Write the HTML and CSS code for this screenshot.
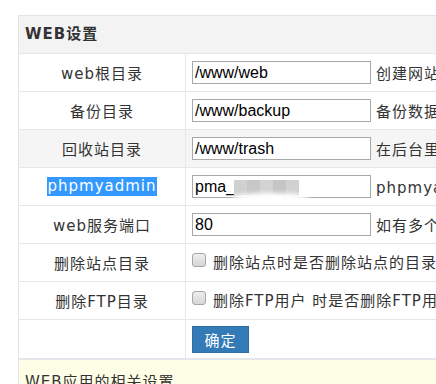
FILE: index.html
```html
<!doctype html>
<html lang="zh-CN">

<head>
    <meta charset="utf-8">
    <title>WEB设置</title>
    <link rel="stylesheet" href="styles.css">
</head>

<body>
    <div class="panel">
        <div class="panel_head">WEB设置</div>

        <div class="row">
            <div class="label">web根目录</div>
            <div class="field">
                <input class="text" type="text" value="/www/web">
                <span class="tip">创建网站时默认的根目录</span>
            </div>
        </div>
        <div class="row">
            <div class="label">备份目录</div>
            <div class="field">
                <input class="text" type="text" value="/www/backup">
                <span class="tip">备份数据存放的目录</span>
            </div>
        </div>
        <div class="row hover">
            <div class="label">回收站目录</div>
            <div class="field">
                <input class="text" type="text" value="/www/trash">
                <span class="tip">在后台里删除的文件会移到这里</span>
            </div>
        </div>
        <div class="row">
            <div class="label"><span class="sel">phpmyadmin</span></div>
            <div class="field">
                <span class="masked">
                    <input class="text" type="text" value="pma_">
                    <span class="mosaic">
                        <i class="m1"></i><i class="m2"></i><i class="m3"></i><i class="m4"></i><i class="m5"></i>
                    </span>
                    <span class="smear"></span>
                </span>
                <span class="tip">phpmyadmin访问目录</span>
            </div>
        </div>
        <div class="row">
            <div class="label">web服务端口</div>
            <div class="field">
                <input class="text" type="text" value="80">
                <span class="tip">如有多个端口请用逗号隔开</span>
            </div>
        </div>
        <div class="row">
            <div class="label">删除站点目录</div>
            <div class="field">
                <label class="check"><input type="checkbox">删除站点时是否删除站点的目录</label>
            </div>
        </div>
        <div class="row">
            <div class="label">删除FTP目录</div>
            <div class="field">
                <label class="check"><input type="checkbox">删除FTP用户 时是否删除FTP用户目录</label>
            </div>
        </div>
        <div class="row row_btn">
            <div class="label"></div>
            <div class="field">
                <button class="btn" type="button">确定</button>
            </div>
        </div>

        <div class="notice">WEB应用的相关设置</div>
    </div>
</body>

</html>
```

FILE: styles.css
```css
html {
    overflow: hidden;
}

body {
    margin: 0;
    background: #fff;
    color: #333;
    font-family: "DejaVu Sans", "Noto Sans CJK SC", sans-serif;
    font-size: 15px;
    letter-spacing: 1px;
}

.panel {
    margin: 15px 0 0 18px;
    width: 760px;
    border: 1px solid #e3e4e6;
    border-bottom: 0;
}

.panel_head {
    height: 37px;
    line-height: 37px;
    padding-left: 6px;
    background: #f3f3f4;
    border-bottom: 1px solid #e6e6e6;
    font-weight: bold;
    color: #333;
}

.row {
    display: grid;
    grid-template-columns: 167px 1fr;
    height: 37px;
    border-bottom: 1px solid #e7e7e7;
}

.row.hover {
    background: #f5f5f5;
}

.label {
    display: flex;
    align-items: center;
    justify-content: center;
    border-right: 1px solid #e7e7e7;
}

.sel {
    background: #3399ff;
    color: #fff;
    line-height: 19px;
}

.field {
    display: flex;
    align-items: center;
    padding-left: 6px;
    white-space: nowrap;
}

.text {
    box-sizing: border-box;
    width: 179px;
    height: 23px;
    margin: 0;
    padding: 0 2px;
    border: 1px solid #a9a9a9;
    border-radius: 0;
    font-family: "Liberation Sans", Arial, sans-serif;
    font-size: 16px;
    letter-spacing: 0;
    color: #000;
    background: #fff;
}

.tip {
    margin-left: 5px;
}

.masked {
    position: relative;
    display: block;
    height: 23px;
}

.mosaic {
    position: absolute;
    left: 42px;
    top: 5px;
    display: flex;
    height: 16px;
    filter: blur(0.6px);
}

.mosaic i {
    display: block;
    width: 13px;
    height: 16px;
}

.m1 { background: #d0d0d0; }
.m2 { background: #c7c7c7; }
.m3 { background: #d3d3d3; }
.m4 { background: #c5c5c5; }
.m5 { background: #d1d1d1; }

.smear {
    position: absolute;
    left: 40px;
    top: 18px;
    width: 78px;
    height: 9px;
    border-radius: 50%;
    background: #fff;
    filter: blur(2px);
}

.check {
    display: flex;
    align-items: center;
    margin-top: -3px;
}

.check input {
    appearance: none;
    -webkit-appearance: none;
    box-sizing: border-box;
    width: 14px;
    height: 14px;
    margin: -3px 7px 0 0;
    border: 1px solid #a6a6a6;
    border-radius: 3px;
    background: linear-gradient(#eeeeee, #d6d6d6);
}

.row_btn {
    height: 38px;
    border-bottom: 2px solid #e3e6eb;
}

.row_btn .field {
    align-items: flex-start;
    padding-top: 6px;
}

.btn {
    width: 57px;
    height: 27px;
    padding: 0;
    border: 1px solid #2e6da4;
    border-radius: 0;
    background: #337ab7;
    color: #fff;
    font-family: "Noto Sans CJK SC", sans-serif;
    font-size: 15px;
    letter-spacing: 1px;
}

.notice {
    height: 40px;
    padding: 10px 0 0 6px;
    background: #fefee6;
    color: #333;
}
```
